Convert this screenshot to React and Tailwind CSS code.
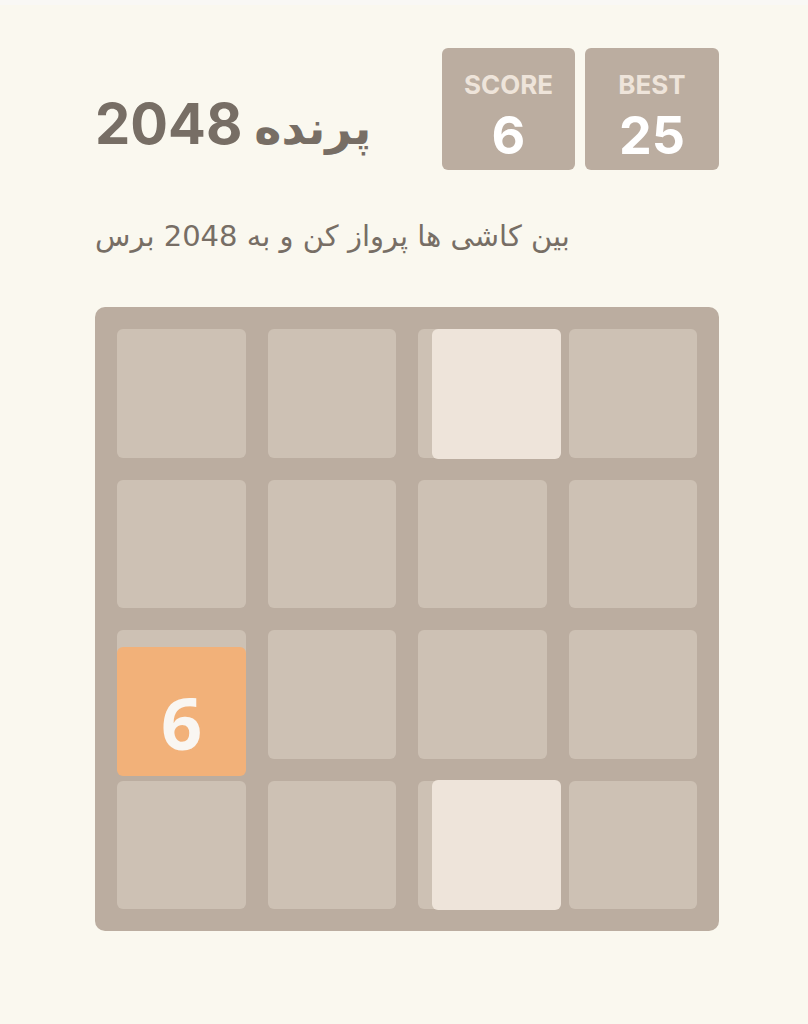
export default function App() {
  const cells = Array.from({ length: 16 });
  const noto = { fontFamily: '"Noto Sans", "DejaVu Sans", sans-serif' };
  const inter = { fontFamily: 'Inter, "DejaVu Sans", sans-serif' };
  return (
    <div className="min-h-[1024px] w-full bg-[#faf8ef]" style={noto}>
      <div className="h-[5px] bg-[#f9f8f5]" />
      <div className="ml-[95px] w-[624px] pt-[43px]">
        <div className="flex items-center justify-between">
          <h1 className="mt-[30px] flex items-baseline gap-[12px] font-bold leading-none text-[#776e65]">
            <span className="text-[56px]" style={inter}>2048</span>
            <span className="text-[46px]" style={{ fontFamily: '"DejaVu Sans", sans-serif' }}>پرنده</span>
          </h1>
          <div className="flex gap-[10px]">
            <div className="flex h-[122px] w-[133px] flex-col items-center rounded-[6px] bg-[#bbada0] pt-[24px]" style={inter}>
              <span className="text-[26px] font-bold leading-none text-[#eee4da]">SCORE</span>
              <span className="mt-[12px] text-[52px] font-bold leading-none text-white">6</span>
            </div>
            <div className="flex h-[122px] w-[134px] flex-col items-center rounded-[6px] bg-[#bbada0] pt-[24px]" style={inter}>
              <span className="text-[26px] font-bold leading-none text-[#eee4da]">BEST</span>
              <span className="mt-[12px] text-[52px] font-bold leading-none text-white">25</span>
            </div>
          </div>
        </div>
        <p className="mt-[52px] text-[29px] leading-none text-[#776e65]" style={{ fontFamily: '"DejaVu Sans", sans-serif' }}>
          بین کاشی ها پرواز کن و به 2048 برس
        </p>
        <div className="relative mt-[56px] grid h-[624px] grid-cols-4 gap-[22px] rounded-[10px] bg-[#bbada0] p-[22px]">
          {cells.map((_, i) => (
            <div key={i} className="rounded-[6px] bg-[#cdc1b4]" />
          ))}
          <div className="absolute left-[337px] top-[22px] h-[130px] w-[129px] rounded-[6px] bg-[#eee4da]" />
          <div className="absolute left-[337px] top-[473px] h-[130px] w-[129px] rounded-[6px] bg-[#eee4da]" />
          <div className="absolute left-[22px] top-[340px] flex h-[129px] w-[129px] items-center justify-center rounded-[6px] bg-[#f2b179] pt-[20px]">
            <span className="text-[72px] font-bold leading-none text-[#f9f6f2]">6</span>
          </div>
        </div>
      </div>
    </div>
  );
}
